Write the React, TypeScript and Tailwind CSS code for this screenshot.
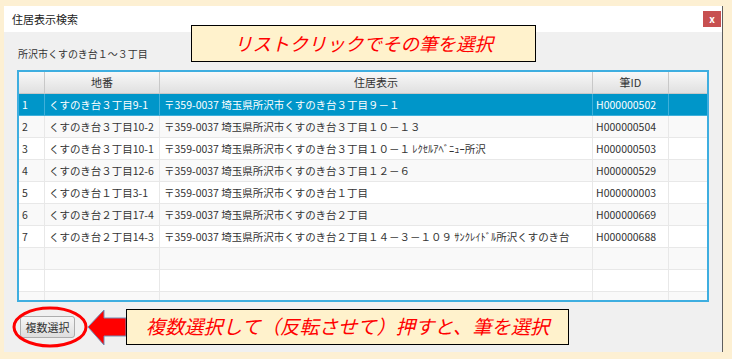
import React from "react";

type Row = { no: string; chiban: string; address: string; id: string };

const rows: Row[] = [
  { no: "1", chiban: "くすのき台３丁目9-1", address: "〒359-0037 埼玉県所沢市くすのき台３丁目９－１", id: "H000000502" },
  { no: "2", chiban: "くすのき台３丁目10-2", address: "〒359-0037 埼玉県所沢市くすのき台３丁目１０－１３", id: "H000000504" },
  { no: "3", chiban: "くすのき台３丁目10-1", address: "〒359-0037 埼玉県所沢市くすのき台３丁目１０－１ ﾚｸｾﾙｱﾍﾞﾆｭｰ所沢", id: "H000000503" },
  { no: "4", chiban: "くすのき台３丁目12-6", address: "〒359-0037 埼玉県所沢市くすのき台３丁目１２－６", id: "H000000529" },
  { no: "5", chiban: "くすのき台１丁目3-1", address: "〒359-0037 埼玉県所沢市くすのき台１丁目", id: "H000000003" },
  { no: "6", chiban: "くすのき台２丁目17-4", address: "〒359-0037 埼玉県所沢市くすのき台２丁目", id: "H000000669" },
  { no: "7", chiban: "くすのき台２丁目14-3", address: "〒359-0037 埼玉県所沢市くすのき台２丁目１４－３－１０９ ｻﾝｸﾚｲﾄﾞﾙ所沢くすのき台", id: "H000000688" },
];

const font = "font-['Noto_Sans_CJK_JP',sans-serif]";

function TableRow({ row, index }: { row?: Row; index: number }) {
  const selected = index === 0;
  const bg = selected ? "bg-[#0096c9] text-white" : index % 2 === 1 ? "bg-[#f9f9f9] text-[#333]" : "bg-white text-[#333]";
  const line = selected ? "border-[#3fb0da]" : "border-[#e8e8e8]";
  return (
    <div className={`flex h-[22px] shrink-0 items-center border-b ${line} ${bg}`}>
      <div className={`w-[26px] h-full flex items-center pl-[3px] border-r ${line}`}>{row?.no}</div>
      <div className={`w-[115px] h-full flex items-center pl-[4px] border-r ${line} whitespace-nowrap overflow-hidden`}>{row?.chiban}</div>
      <div className={`w-[433px] h-full flex items-center pl-[4px] border-r ${line} whitespace-nowrap overflow-hidden`}>{row?.address}</div>
      <div className={`w-[76px] h-full flex items-center pl-[3px] border-r ${line}`}>{row?.id}</div>
      <div className="flex-1 h-full" />
    </div>
  );
}

export default function App() {
  const empties = [7, 8, 9];
  return (
    <div className={`relative w-[732px] h-[359px] overflow-hidden bg-[#fdf0d3] pt-[6px] pl-[4px] ${font}`}>
      {/* Window */}
      <div className="w-[719px] h-[346px] flex flex-col border-r border-[#5e5e5e]">
        <div className="h-[26px] bg-white flex items-center justify-between pl-[8px]">
          <span className="text-[11px] text-[#222]">住居表示検索</span>
          <div className="w-[18px] h-[16px] mr-[1px] bg-[#c75050] flex items-center justify-center text-white text-[10px] font-bold leading-none">
            x
          </div>
        </div>

        <div className="flex-1 bg-[#f0f0f0] px-[13px] pt-[14px]">
          <div className="h-[16px] leading-[16px] ml-[1px] text-[10px] text-[#333]">所沢市くすのき台１〜３丁目</div>

          {/* Table */}
          <div className="mt-[8px] h-[232px] border-2 border-[#3eaee0] bg-white overflow-hidden flex flex-col text-[10.5px]">
            <div className="flex h-[22px] shrink-0 border-b border-[#c8c8c8] bg-gradient-to-b from-[#f8f8f8] to-[#e0e0e0] text-[#333] text-[11px]">
              <div className="w-[26px] border-r border-[#c8c8c8]" />
              <div className="w-[115px] border-r border-[#c8c8c8] flex items-center justify-center">地番</div>
              <div className="w-[433px] border-r border-[#c8c8c8] flex items-center justify-center">住居表示</div>
              <div className="w-[76px] border-r border-[#c8c8c8] flex items-center justify-center">筆ID</div>
              <div className="flex-1" />
            </div>
            {rows.map((r, i) => (
              <TableRow key={r.no} row={r} index={i} />
            ))}
            {empties.map((i) => (
              <TableRow key={i} index={i} />
            ))}
          </div>

          <button className="mt-[14px] ml-[3px] h-[22px] w-[55px] rounded-[3px] border border-[#adadad] bg-gradient-to-b from-[#f6f6f6] to-[#dedede] text-[11px] text-[#333]">
            複数選択
          </button>
        </div>
      </div>

      {/* Annotations */}
      <div className="absolute left-[191px] top-[25px] w-[345px] h-[37px] border border-black bg-[#fff2cc] flex items-center justify-center">
        <span className="italic text-[18.5px] text-[#ff0000] leading-none">リストクリックでその筆を選択</span>
      </div>

      <svg className="absolute left-0 top-0" width="732" height="359" viewBox="0 0 732 359" fill="none">
        <ellipse cx="50" cy="327" rx="36" ry="19" stroke="#ff0000" strokeWidth="3" />
        <polygon
          points="88,327 104,310 104,318 126,318 126,336 104,336 104,345"
          fill="#ff0000"
          stroke="#6f8db5"
          strokeWidth="1"
        />
      </svg>

      <div className="absolute left-[126px] top-[309px] w-[443px] h-[36px] border border-black bg-[#fff2cc] flex items-center justify-center">
        <span className="italic text-[19.3px] text-[#ff0000] leading-none">複数選択して（反転させて）押すと、筆を選択</span>
      </div>
    </div>
  );
}
